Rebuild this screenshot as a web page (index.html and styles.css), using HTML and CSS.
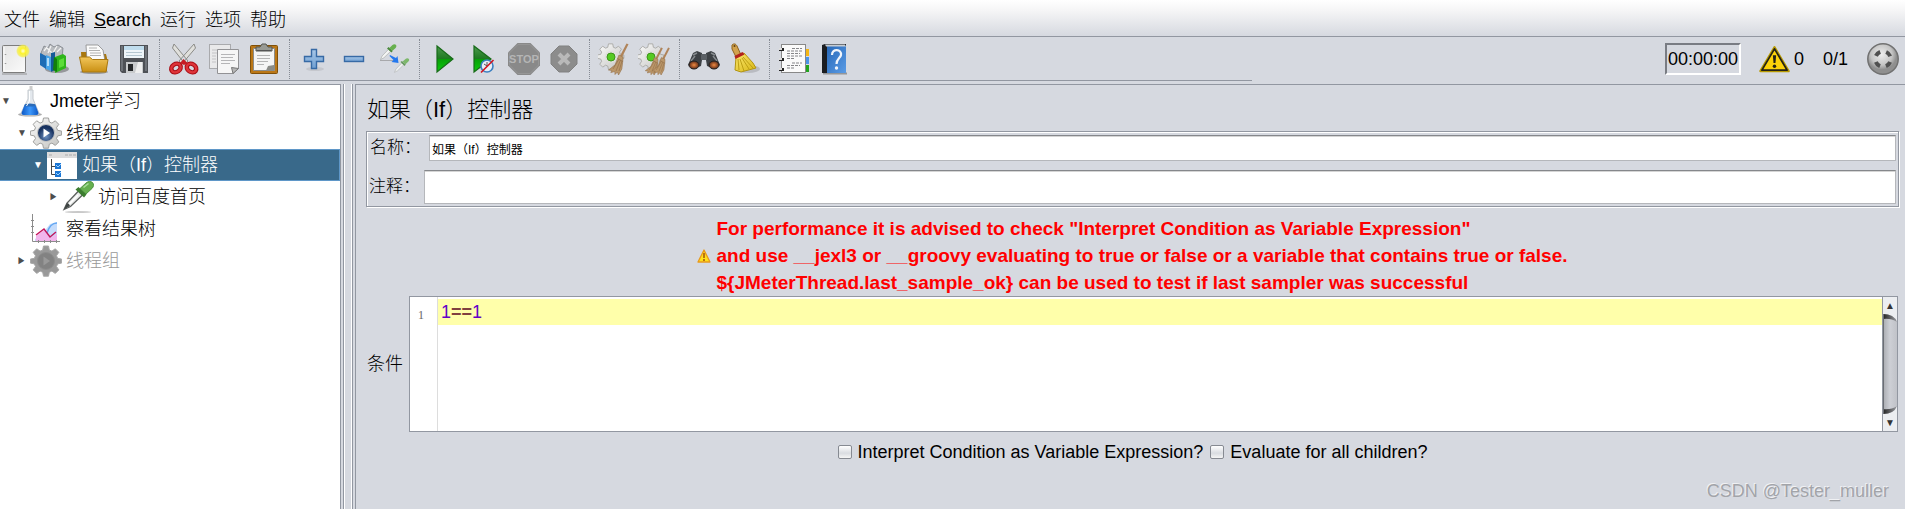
FILE: index.html
```
<!DOCTYPE html>
<html lang="zh">
<head>
  <meta charset="UTF-8" />
  <meta name="viewport" content="width=device-width, initial-scale=1.0"/>
  <title>Apache JMeter - Jmeter学习</title>
  <link rel="stylesheet" href="styles.css">
</head>
<body>

  <!-- shared gradients and shapes -->
  <svg class="defs" width="0" height="0" aria-hidden="true">
    <defs>
      <linearGradient id="paper" x1="0" y1="0" x2="1" y2="1"><stop offset="0" stop-color="#e4e4e4"/><stop offset="1" stop-color="#fafafa"/></linearGradient>
      <radialGradient id="glow"><stop offset="0" stop-color="#fffde0"/><stop offset=".4" stop-color="#fdf32c"/><stop offset=".8" stop-color="#f5ee50" stop-opacity=".8"/><stop offset="1" stop-color="#f5ee50" stop-opacity="0"/></radialGradient>
      <linearGradient id="folder" x1="0" y1="0" x2="0" y2="1"><stop offset="0" stop-color="#f2c65a"/><stop offset="1" stop-color="#c98f13"/></linearGradient>
      <linearGradient id="play" x1="0" y1="0" x2="0" y2="1"><stop offset="0" stop-color="#4d9a4d"/><stop offset=".48" stop-color="#1f7a22"/><stop offset=".52" stop-color="#07a007"/><stop offset="1" stop-color="#0ccc0c"/></linearGradient>
      <linearGradient id="blue" x1="0" y1="0" x2="0" y2="1"><stop offset="0" stop-color="#a9c8e8"/><stop offset="1" stop-color="#6f9fd2"/></linearGradient>
      <linearGradient id="gearFill" x1="0" y1="0" x2="1" y2="1"><stop offset="0" stop-color="#fbfbfb"/><stop offset="1" stop-color="#c2c2bf"/></linearGradient>
      <radialGradient id="ball" cx=".45" cy=".35"><stop offset="0" stop-color="#eeeeee"/><stop offset=".7" stop-color="#c4c4c4"/><stop offset="1" stop-color="#8f8f8f"/></radialGradient>
      <radialGradient id="navy" cx=".5" cy=".7"><stop offset="0" stop-color="#6f93c4"/><stop offset="1" stop-color="#17315f"/></radialGradient>
      <radialGradient id="lens"><stop offset="0" stop-color="#f08a42"/><stop offset="1" stop-color="#5c2a16"/></radialGradient>
      <linearGradient id="straw" x1="0" y1="0" x2="1" y2="1"><stop offset="0" stop-color="#fbe870"/><stop offset="1" stop-color="#d8b613"/></linearGradient>
      <linearGradient id="water" x1="0" y1="0" x2="1" y2="0"><stop offset="0" stop-color="#0c57c4"/><stop offset=".5" stop-color="#3d98fb"/><stop offset="1" stop-color="#0c57c4"/></linearGradient>
      <linearGradient id="book" x1="0" y1="0" x2="1" y2="1"><stop offset="0" stop-color="#2768b8"/><stop offset="1" stop-color="#5b9ce6"/></linearGradient>
      <linearGradient id="thumb" x1="0" y1="0" x2="1" y2="0"><stop offset="0" stop-color="#a9abb0"/><stop offset=".5" stop-color="#cdcfd5"/><stop offset="1" stop-color="#c0c2c8"/></linearGradient>
      <linearGradient id="thumbEnd" x1="0" y1="0" x2="1" y2="0"><stop offset="0" stop-color="#222"/><stop offset="1" stop-color="#9a9ca1"/></linearGradient>
      <path id="gear" d="M13.500 1h5l.8 4 2.600 1.100 3.400-2.300 3.500 3.500-2.300 3.400 1.100 2.600 4 .8v4l-4 .8-1.100 2.600 2.300 3.400-3.500 3.500-3.400-2.300-2.600 1.100-.8 4h-5l-.8-4-2.600-1.100-3.400 2.300-3.500-3.500 2.300-3.400-1.100-2.600-4-.8v-4l4-.8 1.100-2.600-2.300-3.400 3.500-3.500 3.400 2.300 2.600-1.100z"/>
      <g id="twigBroom">
        <path d="M28.500.5l2 .8-6.500 13-2.200-1z" fill="#b0845a"/>
        <path d="M21 12l4 2-.2 4-1 8-3.300 6-1-3-2.500 2.500-.2-3-4 1 1-2-3.300-.5 6.500-5z" fill="#bb976a" stroke="#94714a" stroke-width=".6"/>
        <path d="M21 16l-6 10M22.500 17l-4.500 11M24 18l-3 10M19.500 15.500l5.500 3" stroke="#94704a" stroke-width=".7" fill="none"/>
      </g>
      <g id="dropper">
        <path d="M2 28.500l3-6.500 11.500-12 4 4-12 11.500z" fill="#e9ebea" stroke="#5a5d5c" stroke-width="1.300"/>
        <path d="M4.500 26L16 14" stroke="#fff" stroke-width="1.500"/>
        <path d="M2 28.500l3-6.500 2 1 1 2z" fill="#3f4544"/>
        <path d="M13.500 8.500l3-2.500 8 7.500-2.500 3z" fill="#3c7d2f"/>
        <path d="M18 7.500l6-5.500c2-2 5-2 6.500-.5s1.500 4-.5 6l-6 5.500z" fill="#67b04f" stroke="#3f8532" stroke-width=".8"/>
        <path d="M21.500 6.500l5-4" stroke="#aadd99" stroke-width="1.600"/>
      </g>
      <g id="paleDropper">
        <path d="M1 30l3-7 12.500-13 4 4-13 12.500z" fill="#f4f5f4" stroke="#a9acab" stroke-width="1.300"/>
        <path d="M13.500 8.500l3-2.500 8 7.500-2.500 3z" fill="#4b8a3e"/>
        <path d="M18 7.500l6-5.500c2-2 5-2 6.500-.5s1.500 4-.5 6l-6 5.500z" fill="#67b04f"/>
      </g>
    </defs>
  </svg>

  <nav class="menubar">
    <button>文件</button>
    <button>编辑</button>
    <button><u>S</u>earch</button>
    <button>运行</button>
    <button>选项</button>
    <button>帮助</button>
  </nav>

  <header class="toolbar">
    <div class="tools">
      <button class="first" aria-label="New">
        <svg viewBox="2 0 30 32"><path d="M4 31h25" stroke="#8d8d8d" stroke-width="1.500" opacity=".6"/><rect x="4.500" y="2.500" width="23" height="27" rx="1" fill="url(#paper)" stroke="#7d7d7d"/><path d="M6 4v24h20" stroke="#fff" fill="none"/><path d="M7.500 11v1M7.500 20v1" stroke="#999" stroke-width="1.500"/><circle cx="25" cy="8" r="7" fill="url(#glow)"/></svg>
      </button>
      <button aria-label="Templates">
        <svg viewBox="0 0 32 32"><ellipse cx="19" cy="26" rx="12" ry="4" fill="#555" opacity=".5"/><path d="M3 10l3-7 4 2 2-4 4 3 4-2 5 3-1 10-12 4z" fill="#b9bcc0" stroke="#73777c" stroke-width=".7"/><path d="M6 8l3-4M10 10l3-7M15 10l4-7M19 9l4-4M9 5l6 6" stroke="#f2f2f2" stroke-width="1.300"/><path d="M2 10l6 3v13l-6-4z" fill="#1d6cb5"/><path d="M8 12l5 2v14l-5-2z" fill="#48a4e8"/><path d="M10 15v8" stroke="#d9f0ff" stroke-width="1.500"/><path d="M13 10l4-1v18l-4 2z" fill="#155b98"/><path d="M17 14l8-3 3 2v12l-11 5z" fill="#2eb51a"/><path d="M16 14l3 2v13l-4-2z" fill="#12800b"/><path d="M21 17l5-2v8l-5 2z" fill="#5bdd38"/></svg>
      </button>
      <button aria-label="Open">
        <svg viewBox="0 0 32 32"><ellipse cx="16" cy="29" rx="14" ry="2" fill="#555" opacity=".45"/><path d="M3 9h6l2 2h17l1 4v13H4z" fill="#a97811"/><path d="M8 2h12l5 5 2 11H9z" fill="#fbfbfb" stroke="#888" stroke-width=".8"/><path d="M11 5h8M11 7.500h11M12 10h11M12 12.500h11" stroke="#a9a9a9" stroke-width=".9"/><path d="M1.500 14h10l3 2.500h15.500l-2 12.500H4.500z" fill="url(#folder)" stroke="#a97811"/></svg>
      </button>
      <button aria-label="Save">
        <svg viewBox="0 0 32 32"><path d="M2 2h28v28H4l-2-2z" fill="#4e5156"/><path d="M3 3h2v25H3zM27 3h2v25h-2z" fill="#6e7278"/><path d="M6 3h20v12H6z" fill="#eef5f9"/><path d="M6 3h20v4H6z" fill="#bfdced"/><path d="M8 9.500h16M8 12.500h16" stroke="#b5c7d1"/><rect x="8" y="19" width="17" height="11" fill="#c9cbcd"/><rect x="10" y="21" width="5" height="7" fill="#26282a"/><path d="M20 19h4v11h-7z" fill="#eee"/></svg>
      </button>
      <span class="sep"></span>
      <button aria-label="Cut">
        <svg viewBox="0 0 32 32"><path d="M6 1l-1.500 4L17 21l3-3zM26 1l1.500 4L14 21l-3-3z" fill="#e0e0dc" stroke="#8b8b87"/><g fill="none" stroke="#a80c14" stroke-width="4.500"><ellipse cx="8" cy="25" rx="5" ry="4" transform="rotate(-35 8 25)"/><ellipse cx="23.500" cy="25" rx="5" ry="4" transform="rotate(35 23.500 25)"/></g><g fill="none" stroke="#de3439" stroke-width="2.500"><ellipse cx="8" cy="25" rx="5" ry="4" transform="rotate(-35 8 25)"/><ellipse cx="23.500" cy="25" rx="5" ry="4" transform="rotate(35 23.500 25)"/></g><path d="M12 20l3.500-4 4 4-3.500 2z" fill="#c71c23"/></svg>
      </button>
      <button aria-label="Copy">
        <svg viewBox="0 0 32 32"><rect x="1.500" y="1.500" width="21" height="24" fill="#e9e9ea" stroke="#a9aaad"/><path d="M4 7h11M4 10h5M4 13h4M4 16h4M4 19h4" stroke="#c3c3c5"/><path d="M9.500 6.500h21v19l-5.500 5H9.500z" fill="#f6f6f6" stroke="#929295"/><path d="M13 11.500h14M13 14.500h12M13 17.500h14M13 20.500h9" stroke="#b5b5b7"/><path d="M30.500 25.500l-7-1 1.500 6z" fill="#b7b7b7" stroke="#777"/></svg>
      </button>
      <button aria-label="Paste">
        <svg viewBox="0 0 32 32"><rect x="2.500" y="2.500" width="27" height="28" rx="1" fill="#bb7716" stroke="#805009"/><path d="M5.500 5.500h21v22h-21z" fill="#f5f5f5" stroke="#8c8c89"/><path d="M9 12.500h13M9 15.500h13M9 18.500h11M9 21.500h7" stroke="#b5b5b5"/><path d="M26 22l-6 1-2 4.500h8z" fill="#8b8c88"/><path d="M8 8V4h4l2-3h4l2 3h4v4z" fill="#989a94" stroke="#545651"/><path d="M9 7.500h14" stroke="#555"/></svg>
      </button>
      <span class="sep"></span>
      <button aria-label="Expand All">
        <svg viewBox="0 0 32 32"><ellipse cx="17" cy="26" rx="9" ry="2" fill="#666" opacity=".15"/><path d="M13.500 6.500h5v7h7v5h-7v7h-5v-7h-7v-5h7z" fill="url(#blue)" stroke="#376aa5" stroke-width="1.400"/></svg>
      </button>
      <button aria-label="Collapse All">
        <svg viewBox="0 0 32 32"><rect x="6.500" y="13.500" width="19" height="5" fill="url(#blue)" stroke="#376aa5" stroke-width="1.400"/></svg>
      </button>
      <button aria-label="Toggle">
        <svg viewBox="0 0 32 32"><path d="M2 17.500h16" stroke="#888" opacity=".6"/><use href="#paleDropper" transform="translate(2 1) scale(.52)"/><use href="#paleDropper" transform="translate(16 15) scale(.48)" opacity=".8"/><path d="M12 12l6 3 1.500-2 1 7-7-1 2-2-4-4z" fill="#2478ee"/></svg>
      </button>
      <span class="sep"></span>
      <button aria-label="Start">
        <svg viewBox="0 0 32 32"><path d="M9 3l16 13L9 29z" fill="url(#play)" stroke="#176b18" stroke-width="1.200"/></svg>
      </button>
      <button aria-label="Start no pauses">
        <svg viewBox="0 0 32 32"><path d="M6 3l17 13L6 29z" fill="url(#play)" stroke="#176b18" stroke-width="1.200"/><circle cx="19" cy="23" r="6" fill="#e7eef7" stroke="#3b7fc0" stroke-width="1.600"/><path d="M19 23l-3-2M19 23v-4" stroke="#555"/><path d="M13 29.500L25.500 17" stroke="#d3131f" stroke-width="1.600"/></svg>
      </button>
      <button aria-label="Stop">
        <svg viewBox="0 0 32 32"><path d="M9.500 0h13L32 9.500v13L22.500 32h-13L0 22.500v-13z" fill="#898989"/><path d="M10 1.500h12L30.500 10v12L22 30.500H10L1.500 22V10z" fill="none" stroke="#969696"/><text x="16" y="20" class="stop-text">STOP</text></svg>
      </button>
      <button aria-label="Shutdown">
        <svg viewBox="0 0 32 32"><path d="M11 3h10l8 8v10l-8 8H11l-8-8V11z" fill="#8c8c8c" stroke="#818181"/><path d="M11 11l10 10M21 11L11 21" stroke="#b9b9b9" stroke-width="4"/></svg>
      </button>
      <span class="sep"></span>
      <button aria-label="Clear">
        <svg viewBox="0 0 32 32"><g transform="translate(-1 0) scale(.85)"><use href="#gear" fill="url(#gearFill)" stroke="#a5a5a2"/></g><circle cx="13" cy="14" r="6" fill="#dededa"/><circle cx="13" cy="14" r="4" fill="#55ca22" stroke="#3c961a"/><use href="#twigBroom"/></svg>
      </button>
      <button aria-label="Clear All">
        <svg viewBox="0 0 32 32"><g transform="translate(-1 0) scale(.85)"><use href="#gear" fill="url(#gearFill)" stroke="#a5a5a2"/></g><circle cx="13" cy="14" r="6" fill="#dededa"/><circle cx="13" cy="14" r="4" fill="#55ca22" stroke="#3c961a"/><use href="#twigBroom" transform="translate(-2 4) scale(.88)"/><use href="#twigBroom" transform="translate(5 4) scale(.88)"/></svg>
      </button>
      <span class="sep"></span>
      <button aria-label="Search">
        <svg viewBox="0 0 32 32"><path d="M5 10l4-2 5 2v2h4v-2l5-2 4 2 5 12-5 4-8-3-1-6h-4l-1 6-8 3-5-4z" fill="#3d4145"/><path d="M5 12l4-2M23 10l4 2M3 18l4-5M29 18l-4-5" stroke="#858a8e" stroke-width="1.500"/><rect x="13" y="11" width="6" height="6" rx="1" fill="#5b6065"/><ellipse cx="6" cy="22" rx="5" ry="4" fill="url(#lens)" stroke="#222"/><ellipse cx="26" cy="22" rx="5" ry="4" fill="url(#lens)" stroke="#222"/></svg>
      </button>
      <button aria-label="Reset Search">
        <svg viewBox="0 0 32 32"><ellipse cx="20" cy="26" rx="12" ry="4" fill="#444" opacity=".2"/><path d="M4 2c2-2 4-1 5 1l4 9-5 2-4-8z" fill="#d2a24c" stroke="#8d621d"/><circle cx="6.500" cy="3" r="1" fill="#604214"/><path d="M8 14l8-4 9 10 3 5-15 4-6-2z" fill="url(#straw)" stroke="#b29411"/><path d="M10 16l1 11M12 16l4 12M14 15l7 11M15 14l10 11" stroke="#b89a10" stroke-width=".9"/><path d="M6.500 13l8-4 2 2.500-9 4.500z" fill="#b3221c"/></svg>
      </button>
      <span class="sep"></span>
      <button aria-label="Function Helper">
        <svg viewBox="0 0 32 32"><path d="M26 6h5v7h-5z" fill="#f4b614"/><path d="M26 14h5v7h-5z" fill="#4b94ea"/><path d="M26 22h5v7h-5z" fill="#22a51e"/><rect x="3.500" y="1.500" width="24" height="28" fill="#fafafa" stroke="#888"/><path d="M14 5.500h10M9 8h15M9 10.500h13M9 13h15M9 15.500h8M14 20h10M9 22.500h13M9 25h8" stroke="#77777b" stroke-width=".9" stroke-dasharray="3 1"/><path d="M1 6.500h5M1 16.500h5M1 26.500h5" stroke="#222" stroke-width="3"/><path d="M1 6h3M1 16h3M1 26h3" stroke="#ddd" stroke-width="2"/></svg>
      </button>
      <button aria-label="Help">
        <svg viewBox="0 0 32 32"><path d="M5 30.500h24" stroke="#555" opacity=".5" stroke-width="2"/><path d="M4 2l3-1h21v29H4z" fill="#1b1d21"/><path d="M9 3h19v27H9z" fill="url(#book)"/><path d="M7 1.500h20l1 2H8z" fill="#c5ccd3"/><path d="M14 12c0-7 10-6 9 0-.5 3-4.500 4-4.500 9" fill="none" stroke="#f1f5fb" stroke-width="2.200"/><circle cx="18.500" cy="25" r="1.700" fill="#f1f5fb"/></svg>
      </button>
    </div>

    <div class="status">
      <output class="timer">00:00:00</output>
      <button class="warn" aria-label="Log errors">
        <svg viewBox="0 0 32 28"><path d="M16 2L30.500 26.500h-29z" fill="#ffd800" stroke="#b89a00" stroke-width="2.500" stroke-linejoin="round"/><path d="M16 3.500L29 25.500H3z" fill="#fcd209" stroke="#252216" stroke-width="1.800" stroke-linejoin="round"/><path d="M14.300 10h3.400l-.7 8h-2z" fill="#252216"/><circle cx="16" cy="21.500" r="1.800" fill="#252216"/></svg>
        <span>0</span>
      </button>
      <span class="threads">0/1</span>
      <svg class="state" viewBox="0 0 32 32"><circle cx="16" cy="16" r="15.200" fill="url(#ball)" stroke="#717171" stroke-width="1.500"/><circle cx="16" cy="16" r="7.700" fill="none" stroke="#505050" stroke-width="4" stroke-dasharray="6 6.095" stroke-dashoffset="-3"/></svg>
    </div>
  </header>

  <main class="workspace">
    <aside class="tree">
      <ul>
        <li class="level0"><span class="arrow">▼</span>
          <svg viewBox="0 0 32 32"><ellipse cx="16" cy="29.500" rx="12" ry="2" fill="#777" opacity=".6"/><path d="M14 5h5v9l6 14q0 2-2 2H9q-2 0-2-2l7-14z" fill="#e3e8ed" stroke="#c4c9ce"/><path d="M17 1v4" stroke="#ccc" stroke-width="3"/><path d="M10.500 20h11l3 8q0 2-2 2h-13q-2 0-2-2z" fill="url(#water)"/><ellipse cx="16" cy="20" rx="5.500" ry="1.500" fill="#2b6bb8"/><path d="M15.500 6v10l-3 5" stroke="#fff" fill="none"/></svg>
          <span>Jmeter学习</span></li>
        <li class="level1"><span class="arrow">▼</span>
          <svg viewBox="0 0 32 32"><use href="#gear" fill="url(#gearFill)" stroke="#a0a09e"/><circle cx="16" cy="16" r="8.500" fill="url(#navy)" stroke="#c6c6c4"/><path d="M13.500 11.500l6.500 4.500-6.500 4.500z" fill="#fff"/></svg>
          <span>线程组</span></li>
        <li class="level2 selected"><span class="arrow">▼</span>
          <svg viewBox="0 0 32 32"><path d="M1 3h30v27H1z" fill="#fff"/><path d="M1 3h30v6H1z" fill="#dcdcdc"/><path d="M3 6h3M19 6h3M23 6h3M27 6h3" stroke="#bbb" stroke-width="1.500"/><path d="M5.500 10v15.500h4M5.500 17.500h4" stroke="#454545" fill="none"/><path d="M9 14h6v6H9zM9 22h6v6H9z" fill="#1b76d4"/><path d="M10 16l2 2 3-3M10 24l2 2 3-3" stroke="#9fd3ff" fill="none"/></svg>
          <span>如果（If）控制器</span></li>
        <li class="level3"><span class="arrow right">▶</span>
          <svg viewBox="0 0 32 32"><ellipse cx="16" cy="31" rx="13" ry="1" fill="#777" opacity=".4"/><use href="#dropper"/></svg>
          <span>访问百度首页</span></li>
        <li class="level1"><span class="arrow"></span>
          <svg viewBox="0 0 32 32"><path d="M5 26l8-6 7-9 7-2v19H5z" fill="#c5dcfb"/><path d="M17 20q3-10 10-10" stroke="#65a8f2" fill="none" stroke-width="1.500"/><path d="M6 23l8-6 6 8 7-4v7H6z" fill="#f1b5ec"/><path d="M6 22l8-6 6 8 6-5" stroke="#c4145b" fill="none" stroke-width="1.400"/><path d="M2.500 1v27.500H30M1 7.500h3M1 13.500h3M1 19.500h3M8.500 27v3M14.500 27v3M20.500 27v3M26.500 27v3" stroke="#8c8c8c" fill="none"/></svg>
          <span>察看结果树</span></li>
        <li class="level1 off"><span class="arrow right">▶</span>
          <svg viewBox="0 0 32 32"><use href="#gear" fill="#999" stroke="#a7a7a7"/><circle cx="16" cy="16" r="8.500" fill="#828282" stroke="#8d8d8d"/><path d="M13.500 11.500l6.500 4.500-6.500 4.500z" fill="#999"/></svg>
          <span>线程组</span></li>
      </ul>
    </aside>
    <div class="splitter"></div>

    <section class="panel">
      <h1>如果（If）控制器</h1>
      <div class="fields">
        <div class="field name"><label for="name">名称：</label><input id="name" type="text" value="如果（If）控制器"></div>
        <div class="field comment"><label for="comment">注释：</label><input id="comment" type="text"></div>
      </div>

      <div class="advice">
        <svg viewBox="0 0 14 14"><path d="M7 1l6 12H1z" fill="#ffe11a" stroke="#e99a1b" stroke-width="1.300" stroke-linejoin="round"/><path d="M7 4v5M7 10v2" stroke="#a5510c" stroke-width="1.500"/></svg>
        <p>For performance it is advised to check "Interpret Condition as Variable Expression"<br>and use __jexl3 or __groovy evaluating to true or false or a variable that contains true or false.<br>${JMeterThread.last_sample_ok} can be used to test if last sampler was successful</p>
      </div>

      <div class="condition">
        <span class="cond-label">条件</span>
        <div class="editor">
          <div class="gutter">1</div>
          <div class="code" contenteditable="true" aria-label="条件"><div class="line"><span class="num">1</span><span class="op">==</span><span class="num">1</span></div></div>
          <div class="scrollbar">
            <button aria-label="Up">▲</button>
            <svg viewBox="0 0 14 100" preserveAspectRatio="none"><path d="M0 0q11 0 14 8v84q-3 8-14 8z" fill="url(#thumb)"/><path d="M0 0q11 0 14 8-6-4-14-3zM0 100q11 0 14-8-6 4-14 3z" fill="url(#thumbEnd)"/><path d="M.5 0v100" stroke="#6b6e74"/></svg>
            <button aria-label="Down">▼</button>
          </div>
        </div>
      </div>

      <div class="checks">
        <label><input type="checkbox">Interpret Condition as Variable Expression?</label>
        <label><input type="checkbox">Evaluate for all children?</label>
      </div>
    </section>
  </main>

  <div class="watermark">CSDN @Tester_muller</div>

</body>
</html>
```
FILE: styles.css
```
* {
  box-sizing: border-box;
}
body {
  margin: 0;
  min-height: 100vh;
  display: flex;
  flex-direction: column;
  background-color: #d6d9e0;
  color: #000;
  font-family: "Liberation Sans", "Noto Sans CJK SC", sans-serif;
  font-size: 18px;
  font-weight: 300;
  line-height: 24px;
}
button {
  padding: 0;
  border: none;
  background: none;
  color: inherit;
  font: inherit;
}
svg {
  display: block;
  flex: none;
}
.defs {
  position: absolute;
}

/* menu and toolbar */
.menubar {
  display: flex;
  gap: 9px;
  height: 37px;
  padding: 4px 4px 0;
  border-bottom: 1px solid #9297a1;
  background: linear-gradient(#fff, #f5f5f6 30%, #d6d9e0);
}
.toolbar {
  display: flex;
  justify-content: space-between;
  height: 47px;
}
.tools {
  display: flex;
  align-items: center;
  gap: 8px;
  height: 44px;
  padding-right: 402px;
  border-bottom: 1px solid #9297a1;
}
.tools button,
.tools svg {
  width: 32px;
  height: 32px;
}
.tools .first,
.tools .first svg {
  width: 30px;
}
.sep {
  width: 2px;
  height: 40px;
  border-right: 1px dotted #858a94;
}
.stop-text {
  font-size: 11px;
  font-weight: bold;
  fill: #b5b5b5;
  text-anchor: middle;
}
.status {
  display: flex;
  align-items: center;
  height: 44px;
  padding-right: 6px;
}
.timer {
  padding: 2px 1px;
  border: 2px solid;
  border-color: #797c83 #fff #fff #797c83;
}
.warn {
  display: flex;
  align-items: center;
  gap: 4px;
  margin: 0 19px 0 18px;
}
.warn svg {
  width: 31px;
  height: 28px;
}
.state {
  width: 32px;
  height: 32px;
  margin-left: 19px;
}

/* tree */
.workspace {
  display: flex;
  flex: 1;
}
.tree {
  flex: none;
  width: 341px;
  border: solid #9297a1;
  border-width: 1px 1px 0 0;
  background-color: #fff;
}
.tree ul {
  margin: 0;
  padding: 0;
  list-style: none;
}
.tree li {
  display: flex;
  align-items: center;
  height: 32px;
  padding-left: 1px;
}
.tree li svg {
  width: 32px;
  height: 32px;
  margin: 0 4px;
}
.tree .level1 {
  padding-left: 17px;
}
.tree .level2 {
  padding-left: 33px;
}
.tree .level3 {
  padding-left: 49px;
}
.tree .selected {
  border: 1px solid #5f97c8;
  border-left: none;
  background-color: #39698a;
  color: #fff;
}
.tree .off {
  color: #999;
}
.arrow {
  width: 9px;
  color: #4d4d4d;
  font-family: "DejaVu Sans", sans-serif;
  font-size: 10px;
}
.arrow.right {
  font-size: 9px;
}
.selected .arrow {
  color: #fff;
}
.splitter {
  flex: none;
  width: 10px;
  margin: 0 2px;
  border: solid #9297a1;
  border-width: 0 1px;
  box-shadow: inset 1px 0 #fff, inset -1px 0 #fff;
}

/* controller panel */
.panel {
  flex: 1;
  padding: 9px 6px 0 10px;
  border: solid #9297a1;
  border-width: 1px 0 0 1px;
}
.panel h1 {
  margin: 0 0 5px 1px;
  font-size: 22px;
  font-weight: 300;
  line-height: 32px;
}
.fields {
  padding: 3px 2px 2px;
  border: 1px solid #9297a1;
  box-shadow: 1px 1px #fff, inset 1px 1px #fff;
}
.field {
  display: flex;
  align-items: center;
}
.field input {
  flex: 1;
  height: 26px;
  padding: 0 2px;
  border: 1px solid #b5b7bb;
  border-top-color: #85878b;
  background-color: #fff;
  box-shadow: inset 0 1px #d5d5d5;
  color: #000;
  font-family: inherit;
  font-size: 12px;
}
.field label {
  font-size: 17px;
}
.field.name label {
  width: 60px;
  padding-left: 1px;
}
.field.comment {
  margin-top: 9px;
}
.field.comment label {
  width: 55px;
}
.field.comment input {
  height: 34px;
}
.advice {
  display: flex;
  align-items: center;
  justify-content: center;
  gap: 5px;
  padding: 8px 0 0;
  color: #f00;
  font-weight: bold;
}
.advice svg {
  width: 14px;
  height: 14px;
}
.advice p {
  margin: 0;
  font-size: 19px;
  line-height: 27px;
}
.condition {
  display: flex;
  align-items: center;
  gap: 6px;
  padding: 0 1px 0 1px;
}
.cond-label {
  width: 36px;
}
.editor {
  display: flex;
  flex: 1;
  height: 136px;
  border: 1px solid #9297a1;
  background-color: #fff;
}
.gutter {
  width: 28px;
  padding: 6px 13px 0 0;
  border-right: 1px solid #ddd;
  color: #666;
  font-family: "Liberation Serif", serif;
  font-size: 12px;
  text-align: right;
}
.code {
  flex: 1;
  padding-top: 2px;
  outline: none;
}
.line {
  padding-left: 3px;
  background-color: #ffffaa;
  line-height: 26px;
}
.num {
  color: #6400c8;
}
.op {
  color: #804040;
  font-weight: bold;
}
.scrollbar {
  display: flex;
  flex-direction: column;
  width: 15px;
  border-left: 1px solid #9297a1;
  background-color: #eceef1;
}
.scrollbar svg {
  flex: 1;
  width: 14px;
  min-height: 0;
}
.scrollbar button {
  height: 17px;
  color: #333;
  font-family: "DejaVu Sans", sans-serif;
  font-size: 10px;
  line-height: 17px;
}
.checks {
  display: flex;
  justify-content: center;
  gap: 7px;
  padding-top: 8px;
}
.checks label {
  display: flex;
  align-items: center;
  gap: 6px;
}
.checks input {
  appearance: none;
  width: 14px;
  height: 14px;
  margin: 0;
  border: 1px solid #868a92;
  border-radius: 2px;
  background: linear-gradient(#fff, #d9dce1 60%, #f5f5f5);
}

.watermark {
  position: absolute;
  right: 16px;
  bottom: 6px;
  color: #a2a4a9;
  text-shadow: -1px -1px #f0f1f4;
}
```
